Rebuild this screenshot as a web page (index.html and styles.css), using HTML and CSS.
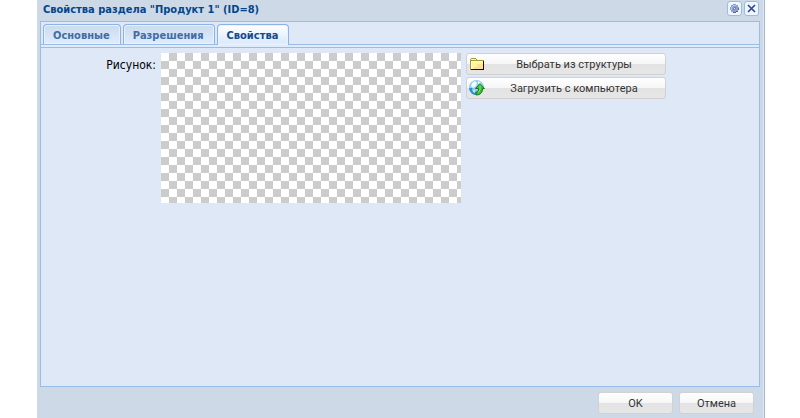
FILE: index.html
```html
<!DOCTYPE html>
<html lang="ru">
<head>
<meta charset="utf-8">
<title>Свойства раздела</title>
<link rel="stylesheet" href="styles.css">
</head>
<body>
<section class="dialog" aria-labelledby="title">
  <header class="titlebar">
    <h1 id="title">Свойства раздела "Продукт 1" (ID=8)</h1>
    <button class="tool" type="button" aria-label="Настройки">
      <svg width="11" height="11" viewBox="0 0 11 11" shape-rendering="crispEdges"><path d="M4 1h3v1h2v2h1v3H9v2H7v1H4V9H2V7H1V4h1V2h2z" fill="#8c9fd2"/><path d="M4 2h3v1H4v1H3v3H2V4h1V3h1z" fill="#b4c3ea"/><path d="M5 4h2v2H6v1H4V5h1z" fill="#6f84bd"/><path d="M5 5h1v1H5z" fill="#dce5fa"/><path d="M4 9h3v1H4zM9 5h1v2H9zM7 8h2v1H7z" fill="#53659a"/></svg>
    </button>
    <button class="tool" type="button" aria-label="Закрыть">
      <svg width="11" height="11" viewBox="0 0 11 11"><path d="M2 2l7 7M9 2L2 9" stroke="#2d4695" stroke-width="1.6"/></svg>
    </button>
  </header>
  <main class="panel">
    <nav class="tabs" role="tablist">
      <button class="tab" type="button" role="tab">Основные</button>
      <button class="tab" type="button" role="tab">Разрешения</button>
      <button class="tab active" type="button" role="tab" aria-selected="true">Свойства</button>
    </nav>
    <div class="strip"></div>
    <div class="field">
      <span class="label">Рисунок:</span>
      <div class="preview" role="img" aria-label="Рисунок"></div>
      <div class="actions">
        <button class="btn" type="button">
          <svg width="16" height="16" viewBox="0 0 16 16" shape-rendering="crispEdges"><path d="M1 3h1V2h5v1h1v1h7v10H1z" fill="#a39a3c"/><path d="M2 3h5v1H2z" fill="#fff9a8"/><path d="M2 5h12v8H2z" fill="#fff6a0"/><path d="M8 8h6v5H5v-2h3z" fill="#ffdf9a"/><path d="M2 5h12v1H3v7H2z" fill="#fffde0"/><path d="M15 5v9H2v-1h12V5z" fill="#111"/></svg>
          <span>Выбрать из структуры</span>
        </button>
        <button class="btn" type="button">
          <svg width="16" height="16" viewBox="0 0 16 16"><circle cx="7.5" cy="7.5" r="7.5" fill="#8fcdf2"/><path d="M0 8a7.5 7.5 0 0 0 8 7l-2-4-3-3z" fill="#2f8fd2"/><path d="M3 3l3-2 2 2-1 3-3 2-2-2zM9 1l3 2 2 4-3-1-2-3z" fill="#f4fcff"/><path d="M3 9l3 1v3l-2-1z" fill="#b9e4f8"/><path d="M11 3.5L15.5 8.500H13.500c0 4-2 6.500-6.500 6.500v-3c2 0 2.500-1 2.500-3.500H6.500z" fill="#3dbb35" stroke="#12741b" stroke-width=".9"/><path d="M11 5.500v4l-1.500 3" fill="none" stroke="#8de36c"/></svg>
          <span>Загрузить с компьютера</span>
        </button>
      </div>
    </div>
  </main>
  <footer class="footer">
    <button class="btn small" type="button">OK</button>
    <button class="btn small" type="button">Отмена</button>
  </footer>
</section>
</body>
</html>
```
FILE: styles.css
```css
* { box-sizing: border-box; }

body {
  margin: 0;
  background: #fff;
  font: 11px/13px "DejaVu Sans Condensed", "DejaVu Sans", sans-serif;
  color: #333;
}

button { font: inherit; color: inherit; padding: 0; margin: 0; }
svg { display: block; flex: none; }

.dialog {
  display: flex;
  flex-direction: column;
  min-height: 100vh;
  margin: 0 35px 0 37px;
  padding: 0 3px;
  background: #ced9e7;
  border-right: 1px solid #a2b5d2;
  box-shadow: inset -1px 0 #dfe8f6;
}

.titlebar {
  display: flex;
  align-items: flex-start;
  gap: 2px;
  height: 21px;
  padding: 1px 2px 0 3px;
}

h1 {
  flex: 1;
  margin: 0;
  padding-top: 2px;
  font: inherit;
  font-weight: bold;
  color: #04468c;
}

.tool {
  display: grid;
  place-items: center;
  width: 15px;
  height: 15px;
  border: 1px solid #99bbe8;
  border-radius: 3px;
  background: #f0f6ff;
}

.panel {
  flex: 1;
  margin-right: 1px;
  border: 1px solid #99bce8;
  background: #dfe8f6;
}

.tabs {
  display: flex;
  gap: 2px;
  height: 22px;
  padding: 2px 2px 0;
}

.tab {
  height: 20px;
  padding: 1px 10px 0 9px;
  border: 1px solid #8db2e3;
  border-bottom: 0;
  border-radius: 4px 4px 0 0;
  background: linear-gradient(#cbdbef, #deecfd);
  box-shadow: inset 0 0 0 1px #e8f2ff;
  font-weight: bold;
  color: #416da3;
}

.tab.active {
  height: 21px;
  padding-top: 0;
  background: linear-gradient(#fff, #deecfd 80%);
  color: #15498b;
  position: relative;
}

.strip {
  height: 4px;
  border: 1px solid #99bce8;
  border-width: 1px 0;
  background: #deecfd;
}

.field {
  display: flex;
  align-items: flex-start;
  gap: 5px;
  padding: 5px;
}

.label {
  width: 110px;
  padding-top: 5px;
  font-size: 12px;
  line-height: 15px;
  text-align: right;
  color: #000;
}

.preview {
  width: 300px;
  height: 150px;
  background: repeating-conic-gradient(#ccc 0 25%, #fff 0 50%) 0 0 / 16px 16px;
}

.actions {
  display: flex;
  flex-direction: column;
  gap: 2px;
  width: 200px;
}

.btn {
  display: flex;
  align-items: center;
  height: 22px;
  padding: 0 2px;
  border: 1px solid #d1d1d1;
  border-radius: 3px;
  background: linear-gradient(#fff, #f6f6f6 48%, #e3e3e3 52%, #e6e6e6);
  font-family: Roboto, "Open Sans", sans-serif;
}

.btn span { flex: 1; text-align: center; }

.small { width: 75px; justify-content: center; }

.footer {
  display: flex;
  justify-content: flex-end;
  gap: 6px;
  padding: 5px 7px 4px;
}
```
